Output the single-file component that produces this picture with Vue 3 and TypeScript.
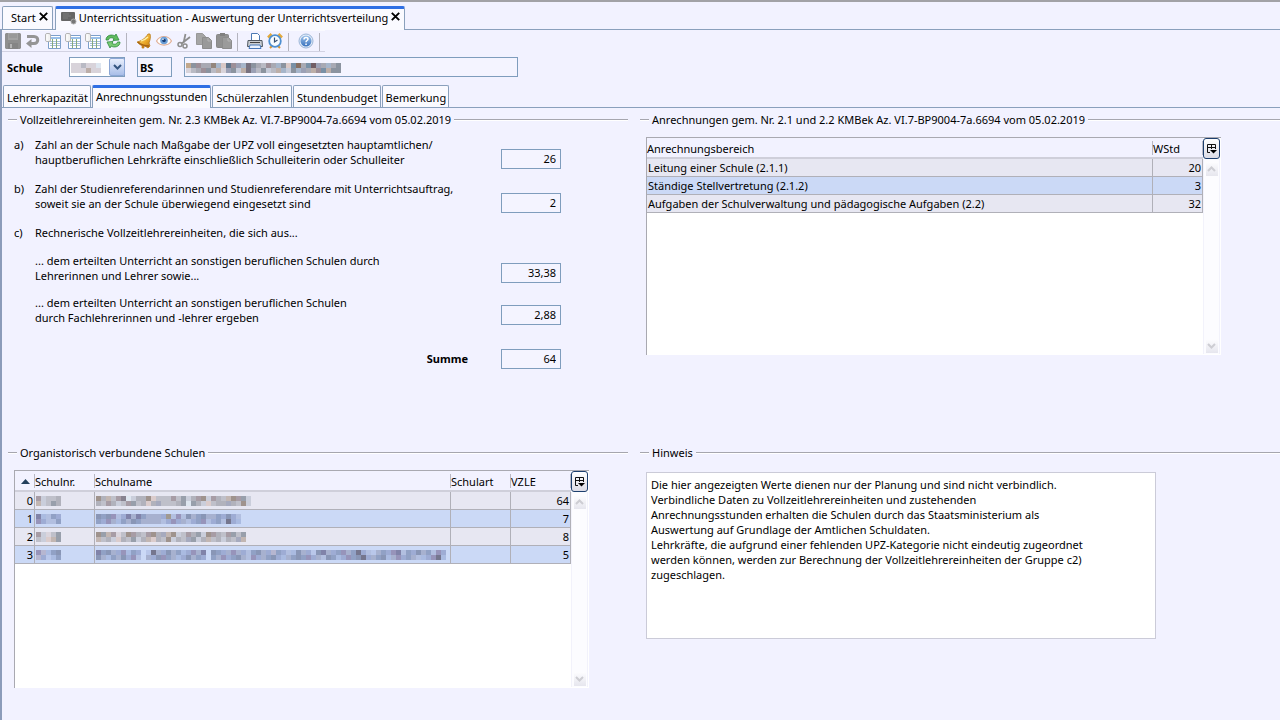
<script setup lang="ts">
import { ref } from 'vue'

interface Mosaic {
  rows: string[]
}

interface School {
  index: number
  number: Mosaic
  name: Mosaic
  kind: string
  vzle: number
}

// One letter per tile; a blank leaves the background visible.
const tileColors: Record<string, string> = {
  a: '#bcaea8', b: '#8b939f', c: '#a8a9b3', d: '#d8d3da', e: '#a6b5ca', f: '#77717f',
  g: '#c5cad8', h: '#93857c', i: '#62768d', j: '#c2a88c', k: '#9d8f98', l: '#b9bac4',
  m: '#d9c8c6', n: '#9ba0b5', o: '#876f62', p: '#715d64', q: '#7990a6', r: '#dde6f0',
  A: '#aebbdd', B: '#8798bd', C: '#a1abc9', D: '#73759c', E: '#97a5cf', F: '#b6c5e8',
  G: '#8e89b0', H: '#7e8bab', I: '#998f80', J: '#a5b6de', K: '#67657c', L: '#b3b1ca',
}

const codeMosaic: Mosaic = { rows: ['ddlddr', 'dddadd'] }
const nameMosaic: Mosaic = {
  rows: ['jbkcchemiknefbclkcebmqocqpncecb', 'dlckbladnbgafnlbglaegbencakqabb'],
}

const schools: School[] = [
  {
    index: 0,
    number: { rows: ['kgllc', 'aglbc'] },
    name: { rows: ['hcalkfrgcchmlllklbgckhgkclahkbg', 'clkcglkblcmcnlllcbrbcgmlccnclhg'] },
    kind: '',
    vzle: 64,
  },
  {
    index: 1,
    number: { rows: ['DJABE', 'GEAAB'] },
    name: { rows: ['HBHGAEDCDBCCCEIAGAHCBHCCBEHEA', 'BEGCJBCHBCCCCAEGECAEBGAEBAKEJ'] },
    kind: '',
    vzle: 7,
  },
  {
    index: 2,
    number: { rows: ['kgdlb', 'lgmab'] },
    name: { rows: ['hbakdlhkclkhcnahglkcbghkclkblb', 'alcgmclbgcamclhgclnbgcalcgclna'] },
    kind: '',
    vzle: 8,
  },
  {
    index: 3,
    number: { rows: ['GLJBH', 'LEFJB'] },
    name: {
      rows: [
        'DBHCEGJBE FKCEHCBJEGCD HBECGCEABHCELBEAJHCEFHDCEBGCBKEAFCBEGDABEHCBAGE',
        'HCJBCHEGA CEHGBCJEHCBE BCGEBHCAGECBHEJCBHBGECAHBJEGBHKECBHJCGEBCAJEGKJ',
      ],
    },
    kind: '',
    vzle: 5,
  },
]

const credits = [
  { area: 'Leitung einer Schule (2.1.1)', hours: 20 },
  { area: 'Ständige Stellvertretung (2.1.2)', hours: 3 },
  { area: 'Aufgaben der Schulverwaltung und pädagogische Aufgaben (2.2)', hours: 32 },
]

const figures = [
  { id: 'fa', mark: 'a)', text: 'Zahl an der Schule nach Maßgabe der UPZ voll eingesetzten hauptamtlichen/\nhauptberuflichen Lehrkräfte einschließlich Schulleiterin oder Schulleiter', value: '26' },
  { id: 'fb', mark: 'b)', text: 'Zahl der Studienreferendarinnen und Studienreferendare mit Unterrichtsauftrag,\nsoweit sie an der Schule überwiegend eingesetzt sind', value: '2' },
  { id: 'fc', mark: 'c)', text: 'Rechnerische Vollzeitlehrereinheiten, die sich aus...', value: '' },
  { id: 'fc1', mark: '', text: '... dem erteilten Unterricht an sonstigen beruflichen Schulen durch\nLehrerinnen und Lehrer sowie...', value: '33,38' },
  { id: 'fc2', mark: '', text: '... dem erteilten Unterricht an sonstigen beruflichen Schulen\ndurch Fachlehrerinnen und -lehrer ergeben', value: '2,88' },
]

const note = `Die hier angezeigten Werte dienen nur der Planung und sind nicht verbindlich.
Verbindliche Daten zu Vollzeitlehrereinheiten und zustehenden
Anrechnungsstunden erhalten die Schulen durch das Staatsministerium als
Auswertung auf Grundlage der Amtlichen Schuldaten.
Lehrkräfte, die aufgrund einer fehlenden UPZ-Kategorie nicht eindeutig zugeordnet
werden können, werden zur Berechnung der Vollzeitlehrereinheiten der Gruppe c2)
zugeschlagen.`

const tabs = ['Lehrerkapazität', 'Anrechnungsstunden', 'Schülerzahlen', 'Stundenbudget', 'Bemerkung']
const activeTab = ref('Anrechnungsstunden')

const toolGroups = [
  [
    { icon: 'save', label: 'Speichern' },
    { icon: 'undo', label: 'Rückgängig' },
    { icon: 'sheet', label: 'Datensatz einfügen' },
    { icon: 'sheet', label: 'Datensatz kopieren' },
    { icon: 'sheet', label: 'Datensatz entfernen' },
    { icon: 'refresh', label: 'Aktualisieren' },
  ],
  [
    { icon: 'bell', label: 'Hinweise' },
    { icon: 'eye', label: 'Ansicht' },
    { icon: 'cut', label: 'Ausschneiden' },
    { icon: 'copy', label: 'Kopieren' },
    { icon: 'paste', label: 'Einfügen' },
  ],
  [
    { icon: 'print', label: 'Drucken' },
    { icon: 'clock', label: 'Wiedervorlage' },
  ],
  [{ icon: 'help', label: 'Hilfe' }],
]

function tiles(m: Mosaic) {
  return m.rows.flatMap((row, y) =>
    [...row].map((c, x) => ({ x: x * 5, y: y * 5, fill: tileColors[c] ?? 'none' })),
  )
}

function mosaicWidth(m: Mosaic) {
  return m.rows[0].length * 5
}
</script>

<template>
  <div class="app">
    <svg class="defs" aria-hidden="true">
      <defs>
        <linearGradient id="gold" x1="0" y1="0" x2="1" y2="1">
          <stop offset="0" stop-color="#ffe58a" /><stop offset=".6" stop-color="#eba928" /><stop offset="1" stop-color="#b86f10" />
        </linearGradient>
        <linearGradient id="blue" x1="0" y1="0" x2="0" y2="1">
          <stop offset="0" stop-color="#9dc3ec" /><stop offset="1" stop-color="#3a72bd" />
        </linearGradient>
      </defs>
      <symbol id="save" viewBox="0 0 16 16">
        <path d="M1 0h14l1 1v14l-1 1H1l-1-1V1z" fill="#8f8f8f" />
        <path d="M3 0h10v7H3z" fill="#a3a3a3" /><path d="M4 2h8M4 4h8" stroke="#8f8f8f" />
        <path d="M3 10h10v6H3z" fill="#858585" /><path d="M5 11h2v4H5z" fill="#b5b5b5" />
      </symbol>
      <symbol id="undo" viewBox="0 0 16 16">
        <path d="M2 3.500h7c5 0 5 7 0 7H5" fill="none" stroke="#959595" stroke-width="3" />
        <path d="M6.500 6v9L1 10.500z" fill="#959595" />
      </symbol>
      <symbol id="sheet" viewBox="0 0 16 16">
        <path d="M3.500 2.500h12v13h-12z" fill="#fff" stroke="#7d9fca" />
        <path d="M6 4h9v2H6z" fill="#9ac0ea" />
        <path d="M5 8.500h10M5 10.500h10M5 12.500h10" stroke="#a5bfdd" />
        <path d="M7.500 6v9M11.500 6v9" stroke="#86aa7d" />
        <rect x=".5" y=".5" width="5" height="8" rx="1.500" fill="#f2f2f2" stroke="#b4b4b4" />
        <path d="M2 1v7" stroke="#fff" />
      </symbol>
      <symbol id="refresh" viewBox="0 0 16 16">
        <path d="M1 7c0-5 6-6 9-4l1-2 3 6-6 .5 1-2C6 4 4 5 3.500 7z" fill="#61bb60" stroke="#2d8b3b" stroke-width=".8" />
        <path d="M15 9c0 5-6 6-9 4l-1 2-3-6 6-.5-1 2c3 1.500 5 .5 5.500-1.500z" fill="#7acb76" stroke="#2d8b3b" stroke-width=".8" />
      </symbol>
      <symbol id="bell" viewBox="0 0 16 16">
        <path d="M14 1c1 3 0 6-1 9l1 3-2 2-3-2c-3 0-5-1-8-4 4-1 8-3 11-8z" fill="url(#gold)" stroke="#b87a18" stroke-width=".8" />
        <path d="M2 9c3 3 7 4 11 4" fill="none" stroke="#a76210" stroke-width="1.500" />
        <path d="M5 8c3-1 5-2 7-4" fill="none" stroke="#fff2a8" stroke-width="1.300" />
        <circle cx="7" cy="14" r="1.500" fill="#c67d16" />
      </symbol>
      <symbol id="eye" viewBox="0 0 16 16">
        <path d="M.5 8C4 2 12 2 15.500 8 12 13.500 4 13.500.5 8z" fill="#fff" stroke="#e0ad93" stroke-width="1.200" />
        <circle cx="8" cy="7.500" r="3.800" fill="#6c9fd7" /><circle cx="8" cy="7.500" r="1.800" fill="#173d75" />
        <circle cx="7" cy="6.300" r=".8" fill="#fff" />
      </symbol>
      <symbol id="cut" viewBox="0 0 16 16">
        <path d="M9.500 1 7.500 10M14 4l-9 7" stroke="#8e8e8e" stroke-width="1.800" />
        <circle cx="4" cy="11.500" r="2" fill="none" stroke="#8e8e8e" stroke-width="1.500" />
        <circle cx="9" cy="13" r="2" fill="none" stroke="#8e8e8e" stroke-width="1.500" />
      </symbol>
      <symbol id="copy" viewBox="0 0 16 16">
        <path d="M.5.5h6l3 3v8h-9z" fill="#a5a5a5" stroke="#989898" />
        <path d="M6.500 4.500h6l3 3v8h-9z" fill="#999" stroke="#8c8c8c" /><path d="M12 5v3h3" fill="none" stroke="#b4b4b4" />
      </symbol>
      <symbol id="paste" viewBox="0 0 16 16">
        <rect x=".5" y="1.500" width="12" height="13" rx="1" fill="#919191" stroke="#888" />
        <path d="M4 0h5v3H4z" fill="#808080" />
        <path d="M6.500 4.500h6l3 3v8h-9z" fill="#9b9b9b" stroke="#8c8c8c" /><path d="M12 5v3h3" fill="none" stroke="#b4b4b4" />
      </symbol>
      <symbol id="print" viewBox="0 0 16 16">
        <path d="M4.500 8V.5h6l2 2V8" fill="#fff" stroke="#4c79b3" />
        <path d="M1 7.500h14l.5 6H.5z" fill="#c9cdd2" stroke="#505861" />
        <path d="M3 9.500h10" stroke="#444" /><path d="M3 12h10l1 3.500H2z" fill="#e9f2ff" stroke="#4778b9" />
      </symbol>
      <symbol id="clock" viewBox="0 0 16 16">
        <path d="M1 4.500 4.500 1M15 4.500 11.500 1" stroke="#e3a93b" stroke-width="2.500" />
        <path d="m3 15 2-2M13 15l-2-2" stroke="#dc9932" stroke-width="2" />
        <circle cx="8" cy="8" r="5.800" fill="#f8fcff" stroke="#4d8fd0" stroke-width="1.800" />
        <path d="M7.500 4.500V9l3-2" fill="none" stroke="#344f72" stroke-width="1.200" />
      </symbol>
      <symbol id="help" viewBox="0 0 16 16">
        <circle cx="8" cy="8" r="7" fill="#e5edf8" stroke="#9ab5d8" /><circle cx="8" cy="8" r="5.500" fill="url(#blue)" />
        <path d="M6 6.500c0-3 4-2.500 4-.5 0 1.500-2 1.500-2 3.200" fill="none" stroke="#fff" stroke-width="1.500" />
        <path d="M7.300 10.500h1.500V12H7.300z" fill="#fff" />
      </symbol>
      <symbol id="close" viewBox="0 0 9 9">
        <path d="m.8.8 7.400 7.400M8.200.8.8 8.200" fill="none" stroke="#000" stroke-width="1.900" />
      </symbol>
      <symbol id="columns" viewBox="0 0 11 11">
        <path d="M4 9.500H1.500v-8h8V6M1 4.500h9M5.500 1v5" fill="none" stroke="#111" />
        <path d="M4 7h7L7.500 10.500z" fill="#000" />
      </symbol>
      <symbol id="chevron" viewBox="0 0 9 6">
        <path d="m1 1 3.500 3.500L8 1" fill="none" stroke="currentColor" stroke-width="2" />
      </symbol>
    </svg>

    <nav class="windows" aria-label="Fenster">
      <div class="window">
        <a href="#start">Start</a>
        <button type="button" class="close" aria-label="Start schließen"><svg><use href="#close" /></svg></button>
      </div>
      <div class="window current">
        <svg class="screen" viewBox="0 0 16 14" aria-hidden="true">
          <rect y="1" width="14" height="9" rx="1" fill="#666" /><path d="M2 3h6M2 5h8M2 7h5" stroke="#7d7d7d" />
          <circle cx="12.500" cy="10.500" r="2.500" fill="#777" stroke="#aaa" />
        </svg>
        <a href="#auswertung" aria-current="page">Unterrichtssituation - Auswertung der Unterrichtsverteilung</a>
        <button type="button" class="close" aria-label="Auswertung schließen"><svg><use href="#close" /></svg></button>
      </div>
    </nav>

    <main class="frame">
      <div class="toolbar" role="toolbar" aria-label="Werkzeuge">
        <div v-for="(group, g) in toolGroups" :key="g" class="tools">
          <button v-for="(tool, t) in group" :key="t" type="button" class="tool" :aria-label="tool.label">
            <svg><use :href="'#' + tool.icon" /></svg>
          </button>
        </div>
      </div>

      <div class="school">
        <label for="school-code">Schule</label>
        <div class="combo">
          <select id="school-code"><option value=""></option></select>
          <svg class="mosaic" :width="mosaicWidth(codeMosaic)" height="10" shape-rendering="crispEdges" aria-hidden="true">
            <rect v-for="(t, i) in tiles(codeMosaic)" :key="i" :x="t.x" :y="t.y" width="5" height="5" :fill="t.fill" />
          </svg>
          <span class="drop"><svg><use href="#chevron" /></svg></span>
        </div>
        <input class="kind" value="BS" readonly aria-label="Schulart" />
        <div class="name">
          <input readonly aria-label="Schulname" />
          <svg class="mosaic" :width="mosaicWidth(nameMosaic)" height="10" shape-rendering="crispEdges" aria-hidden="true">
            <rect v-for="(t, i) in tiles(nameMosaic)" :key="i" :x="t.x" :y="t.y" width="5" height="5" :fill="t.fill" />
          </svg>
        </div>
      </div>

      <div class="tabs" role="tablist">
        <button
          v-for="tab in tabs" :key="tab" type="button" role="tab" class="tab"
          :class="{ active: tab === activeTab }" :aria-selected="tab === activeTab" @click="activeTab = tab"
        >{{ tab }}</button>
      </div>

      <div class="panels">
        <section>
          <h2>Vollzeitlehrereinheiten gem. Nr. 2.3 KMBek Az. VI.7-BP9004-7a.6694 vom 05.02.2019</h2>
          <div class="figures">
            <template v-for="f in figures" :key="f.id">
              <span class="mark">{{ f.mark }}</span>
              <label v-if="f.value" :for="f.id" class="text" :class="{ sub: !f.mark }">{{ f.text }}</label>
              <p v-else class="text">{{ f.text }}</p>
              <input v-if="f.value" :id="f.id" class="number" :value="f.value" readonly />
              <span v-else></span>
            </template>
            <label for="sum" class="sum">Summe</label>
            <input id="sum" class="number" value="64" readonly />
          </div>
        </section>

        <section>
          <h2>Anrechnungen gem. Nr. 2.1 und 2.2 KMBek Az. VI.7-BP9004-7a.6694 vom 05.02.2019</h2>
          <div class="sheet credits">
            <div class="grid">
              <table>
                <colgroup><col /><col class="c-hours" /></colgroup>
                <thead><tr><th>Anrechnungsbereich</th><th>WStd</th></tr></thead>
                <tbody>
                  <tr v-for="c in credits" :key="c.area"><td>{{ c.area }}</td><td class="num">{{ c.hours }}</td></tr>
                </tbody>
              </table>
            </div>
            <div class="side">
              <button type="button" class="columns" aria-label="Spalten wählen"><svg><use href="#columns" /></svg></button>
              <div class="scroll">
                <button type="button" class="up" aria-label="Nach oben"><svg><use href="#chevron" /></svg></button>
                <button type="button" class="down" aria-label="Nach unten"><svg><use href="#chevron" /></svg></button>
              </div>
            </div>
          </div>
        </section>

        <section>
          <h2>Organistorisch verbundene Schulen</h2>
          <div class="sheet schools">
            <div class="grid">
              <table>
                <colgroup><col class="c-index" /><col class="c-short" /><col /><col class="c-short" /><col class="c-vzle" /></colgroup>
                <thead>
                  <tr>
                    <th aria-label="Sortierung"><svg class="sort" viewBox="0 0 9 5"><path d="M4.500 0 9 5H0z" fill="#23405c" /></svg></th>
                    <th>Schulnr.</th><th>Schulname</th><th>Schulart</th><th>VZLE</th>
                  </tr>
                </thead>
                <tbody>
                  <tr v-for="s in schools" :key="s.index">
                    <td class="num">{{ s.index }}</td>
                    <td class="masked">
                      <svg :width="mosaicWidth(s.number)" height="10" shape-rendering="crispEdges">
                        <rect v-for="(t, i) in tiles(s.number)" :key="i" :x="t.x" :y="t.y" width="5" height="5" :fill="t.fill" />
                      </svg>
                    </td>
                    <td class="masked">
                      <svg :width="mosaicWidth(s.name)" height="10" shape-rendering="crispEdges">
                        <rect v-for="(t, i) in tiles(s.name)" :key="i" :x="t.x" :y="t.y" width="5" height="5" :fill="t.fill" />
                      </svg>
                    </td>
                    <td>{{ s.kind }}</td>
                    <td class="num">{{ s.vzle }}</td>
                  </tr>
                </tbody>
              </table>
            </div>
            <div class="side">
              <button type="button" class="columns" aria-label="Spalten wählen"><svg><use href="#columns" /></svg></button>
              <div class="scroll">
                <button type="button" class="up" aria-label="Nach oben"><svg><use href="#chevron" /></svg></button>
                <button type="button" class="down" aria-label="Nach unten"><svg><use href="#chevron" /></svg></button>
              </div>
            </div>
          </div>
        </section>

        <section>
          <h2 id="note-title">Hinweis</h2>
          <textarea class="note" aria-labelledby="note-title" readonly :value="note"></textarea>
        </section>
      </div>
    </main>
  </div>
</template>

<style>
body { background: #f2f2ff; }
</style>

<style scoped>
.app, .app * { box-sizing: border-box; }
.app {
  display: flex;
  flex-direction: column;
  min-height: 100vh;
  border-top: 2px solid #a2a2a6;
  background: #f2f2ff;
  color: #000;
  font: 11px/15px "Noto Sans", "Open Sans", sans-serif;
}
.app button, .app input, .app select, .app textarea { font: inherit; color: inherit; margin: 0; }
.app button { padding: 0; border: 0; background: none; }
.defs { position: absolute; width: 0; height: 0; }
.app p, h2 { margin: 0; font: inherit; }
a { color: inherit; text-decoration: none; }

.windows {
  display: flex;
  align-items: flex-end;
  gap: 2px;
  padding: 4px 0 0 2px;
  border-bottom: 1px solid #8aa0bc;
}
.window {
  display: flex;
  align-items: center;
  gap: 2px;
  height: 23px;
  padding: 0 4px 2px 8px;
  border: 1px solid #8aa0bc;
  border-bottom: 0;
  border-radius: 2px 2px 0 0;
  background: #fafaff;
  white-space: nowrap;
}
.current {
  height: 24px;
  padding: 0 4px 4px 5px;
  border-top: 3px solid #2f6fe4;
  margin-bottom: -1px;
}
.screen { width: 16px; height: 14px; }
.app .close { display: flex; margin: 0 0 2px 1px; }
.close svg { width: 9px; height: 9px; }

.frame { flex: 1; border-left: 2px solid #8c9cba; }

.toolbar {
  display: flex;
  width: 323px;
  height: 22px;
  padding: 2px 0 0 3px;
  border-top: 1px solid #fafaff;
  border-bottom: 1px solid #d2d2e2;
}
.tools { display: flex; gap: 4px; height: 18px; margin-right: 9px; padding-right: 5px; border-right: 1px solid #b4b4be; }
.tool, .tool svg { display: block; width: 16px; height: 16px; }

.school { display: flex; gap: 12px; padding: 5px 0 0 5px; }
.school label { width: 50px; line-height: 22px; font-weight: bold; }
.school input, .number { height: 20px; border: 1px solid #7f9dbd; border-radius: 0; background: #f4f4ff; outline: 0; }
.combo { position: relative; width: 56px; height: 20px; }
.combo select { width: 100%; height: 20px; appearance: none; border: 1px solid #7f9dbd; border-radius: 0; background: #fff; }
.mosaic { position: absolute; top: 6px; left: 2px; pointer-events: none; }
.drop {
  position: absolute;
  top: 1px;
  right: 0;
  display: flex;
  align-items: center;
  justify-content: center;
  width: 16px;
  height: 18px;
  border: 1px solid #8ba6d5;
  border-radius: 2px;
  background: linear-gradient(#e8eefc, #a9bee8);
  color: #35557f;
  pointer-events: none;
}
.drop svg { width: 9px; height: 6px; }
.school .kind { width: 35px; padding: 0 2px; font-weight: bold; }
.name { position: relative; width: 334px; }
.name input { display: block; width: 100%; }

.tabs {
  display: flex;
  align-items: flex-end;
  gap: 1px;
  padding: 6px 0 0 1px;
  border-bottom: 1px solid #8aa0bc;
}
.app .tab {
  height: 22px;
  padding: 2px 2px 0 3px;
  border: 1px solid #8aa0bc;
  border-bottom: 0;
  border-radius: 2px 2px 0 0;
  background: #fafaff;
}
.app .tab.active {
  height: 23px;
  margin-bottom: -1px;
  padding: 0 3px 4px;
  border-top: 3px solid #2f6fe4;
}

.panels {
  display: grid;
  grid-template-columns: 31fr 32fr;
  grid-template-rows: minmax(333px, auto) auto;
  column-gap: 12px;
  padding: 4px 0 0 6px;
}
.panels > section { min-width: 0; }
h2 { display: flex; align-items: center; gap: 3px; white-space: nowrap; }
h2::before, h2::after { content: ""; height: 2px; background: linear-gradient(#a6a6ae 50%, #fff 50%); }
h2::before { width: 9px; }
h2::after { flex: 1; }

.figures {
  display: grid;
  grid-template-columns: 21px 1fr 60px;
  grid-template-rows: 44px 44px 26px 42px 44px 31px;
  margin: 10px 67px 0 6px;
}
.text { white-space: pre-line; }
.sub { padding-top: 2px; }
.app .number { margin-top: 12px; padding: 0 4px 2px; width: 60px; text-align: right; }
.sum { grid-column: 1 / 3; padding: 14px 33px 0 0; text-align: right; font-weight: bold; }

.sheet {
  display: flex;
  height: 218px;
  margin-top: 10px;
  margin-left: 6px;
  border: 1px solid #a9a9b1;
  border-right: 0;
  border-bottom: 0;
  background: #fff;
}
.schools { margin-right: 39px; }
.credits { margin-right: 59px; }
.grid { flex: 1; min-width: 0; }
table { width: 100%; table-layout: fixed; border-collapse: separate; border-spacing: 0; }
.c-index { width: 20px; }
.c-short { width: 60px; }
.c-vzle { width: 60px; }
.c-hours { width: 50px; }
th {
  height: 21px;
  padding: 2px 0 0;
  border-bottom: 2px solid #cfcfda;
  background: linear-gradient(#b9b9c4, #b9b9c4) right 3px / 1px 14px no-repeat #f2f2ff;
  font-weight: normal;
  text-align: left;
}
td {
  height: 18px;
  padding: 0 1px;
  border-right: 1px solid #b0b0b8;
  border-bottom: 1px solid #b0b0b8;
  background: #e7e7f2;
  white-space: nowrap;
  overflow: hidden;
}
tr:nth-child(even) td { background: #cbd9f6; }
.num { text-align: right; }
.masked svg { display: block; opacity: .85; }
.sort { display: block; width: 9px; height: 5px; margin: 0 auto; }

.side { display: flex; flex-direction: column; width: 18px; background: #fff; }
.app .columns {
  display: flex;
  align-items: center;
  justify-content: center;
  width: 17px;
  height: 21px;
  border: 1px solid #1d3f6e;
  border-radius: 3px;
  background: linear-gradient(#fff, #dcdce6);
}
.columns svg { width: 11px; height: 11px; }
.scroll {
  display: flex;
  flex: 1;
  flex-direction: column;
  align-items: center;
  justify-content: space-between;
  width: 17px;
  margin-bottom: 1px;
  padding: 3px 0 1px;
  border: solid #f2f2fb;
  border-width: 0 1px;
  background: #fcfcff;
}
.app .up, .app .down { display: flex; align-items: center; justify-content: center; width: 12px; height: 14px; background: linear-gradient(#fdfdff, #e6e6ee); color: #cdcdd3; }
.up svg, .down svg { width: 9px; height: 6px; }
.up svg { transform: rotate(180deg); }

.app .note {
  display: block;
  width: 510px;
  max-width: 100%;
  height: 167px;
  margin: 12px 0 0 6px;
  padding: 4px;
  border: 1px solid #cbcbd8;
  background: #fff;
  resize: none;
  outline: 0;
}
</style>
